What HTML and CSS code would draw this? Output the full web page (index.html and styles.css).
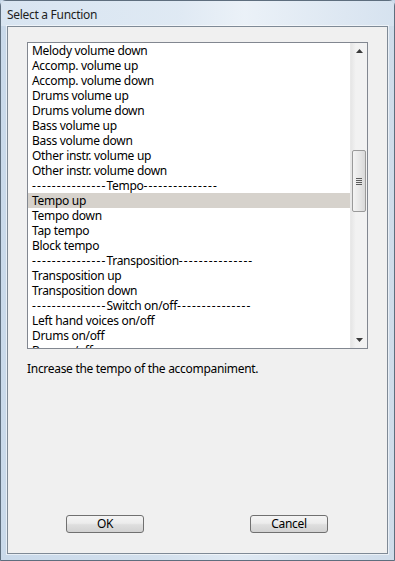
FILE: index.html
```html
<!DOCTYPE html>
<html>
<head>
<meta charset="utf-8">
<link rel="stylesheet" href="styles.css">
</head>
<body>
<div class="window">
  <div class="titlebar"><span class="title">Select a Function</span></div>
  <div class="client">
    <div class="listbox">
      <div class="items">
        <div class="item">Melody volume down</div>
        <div class="item">Accomp. volume up</div>
        <div class="item">Accomp. volume down</div>
        <div class="item">Drums volume up</div>
        <div class="item">Drums volume down</div>
        <div class="item">Bass volume up</div>
        <div class="item">Bass volume down</div>
        <div class="item">Other instr. volume up</div>
        <div class="item">Other instr. volume down</div>
        <div class="item"><span class="dash">---------------</span>Tempo<span class="dash">---------------</span></div>
        <div class="item selected">Tempo up</div>
        <div class="item">Tempo down</div>
        <div class="item">Tap tempo</div>
        <div class="item">Block tempo</div>
        <div class="item"><span class="dash">---------------</span>Transposition<span class="dash">---------------</span></div>
        <div class="item">Transposition up</div>
        <div class="item">Transposition down</div>
        <div class="item"><span class="dash">---------------</span>Switch on/off<span class="dash">---------------</span></div>
        <div class="item">Left hand voices on/off</div>
        <div class="item">Drums on/off</div>
        <div class="item">Bass on/off</div>
        <div class="item">Other instr. on/off</div>
      </div>
      <div class="scrollbar">
        <div class="sb-btn"><svg width="7" height="4" viewBox="0 0 7 4"><path d="M0 4 L3.5 0 L7 4 Z" fill="#3a3a3a"/></svg></div>
        <div class="sb-track">
          <div class="thumb">
            <svg width="6" height="7" viewBox="0 0 6 7"><path d="M0 0.5H6M0 2.5H6M0 4.5H6M0 6.5H6" stroke="#5c5c5c" stroke-width="1"/></svg>
          </div>
        </div>
        <div class="sb-btn"><svg width="7" height="4" viewBox="0 0 7 4"><path d="M0 0 L3.5 4 L7 0 Z" fill="#3a3a3a"/></svg></div>
      </div>
    </div>
    <div class="desc">Increase the tempo of the accompaniment.</div>
    <div class="buttons">
      <button class="btn">OK</button>
      <button class="btn">Cancel</button>
    </div>
  </div>
</div>
</body>
</html>
```
FILE: styles.css
```css
html, body {
  margin: 0;
  padding: 0;
  background: #c4d5e6;
}
.window {
  width: 395px;
  height: 561px;
  box-sizing: border-box;
  border: 1px solid #5e6e7e;
  border-radius: 6px 6px 0 0;
  background: linear-gradient(90deg, #c9d9ea 0%, #d3e0ed 40%, #dfe9f3 60%, #cfdcea 100%);
  display: flex;
  flex-direction: column;
  font-family: "Noto Sans", "Open Sans", sans-serif;
  font-size: 12px;
  letter-spacing: -0.3px;
  color: #000;
}
.titlebar {
  height: 25px;
  display: flex;
  align-items: center;
  padding-left: 6px;
  background: linear-gradient(90deg, rgba(218,230,242,0.9) 0%, rgba(224,234,244,0.9) 45%, rgba(236,242,248,0.9) 62%, rgba(215,227,240,0.9) 100%);
}
.title {
  font-size: 12px;
  color: #1e1e1e;
  padding-top: 1px;
}
.client {
  margin-left: 6px;
  width: 381px;
  height: 528px;
  box-sizing: border-box;
  border: 1px solid #7f8a96;
  box-shadow: 0 0 0 1px rgba(255,255,255,0.55);
  background: #f0f0f0;
  display: flex;
  flex-direction: column;
}
.listbox {
  margin: 15px 0 0 19px;
  width: 341px;
  height: 307px;
  box-sizing: border-box;
  border: 1px solid #828790;
  background: #fff;
  display: flex;
}
.items {
  flex: 1;
  overflow: hidden;
}
.item {
  height: 15px;
  line-height: 15px;
  padding-left: 4px;
  white-space: nowrap;
}
.dash {
  letter-spacing: 1.1px;
}
.item.selected {
  background: #d6d2cc;
}
.scrollbar {
  width: 16px;
  display: flex;
  flex-direction: column;
  background: linear-gradient(90deg, #e6e6e6 0%, #f2f2f2 30%, #f2f2f2 100%);
  border-left: 1px solid #e9e9e9;
}
.sb-btn {
  height: 16px;
  display: flex;
  align-items: center;
  justify-content: center;
}
.sb-track {
  flex: 1;
}
.thumb {
  margin: 91px 0 0 1px;
  width: 14px;
  height: 62px;
  box-sizing: border-box;
  border: 1px solid #9a9a9a;
  border-radius: 2px;
  background: linear-gradient(90deg, #f4f4f4 0%, #e8e8e8 50%, #d9d9d9 100%);
  display: flex;
  align-items: center;
  justify-content: center;
}
.desc {
  margin: 12px 0 0 19px;
  line-height: 15px;
  color: #000;
}
.buttons {
  margin-top: auto;
  padding: 0 0 20px 58px;
  display: flex;
  gap: 106px;
}
.btn {
  width: 78px;
  height: 18px;
  box-sizing: border-box;
  border: 1px solid #707070;
  border-radius: 3px;
  background: linear-gradient(180deg, #f4f4f4 0%, #ececec 45%, #dedede 55%, #d2d2d2 100%);
  font-family: "Noto Sans", "Open Sans", sans-serif;
  font-size: 12px;
  letter-spacing: -0.3px;
  line-height: 14px;
  padding: 0;
  color: #000;
}
```
